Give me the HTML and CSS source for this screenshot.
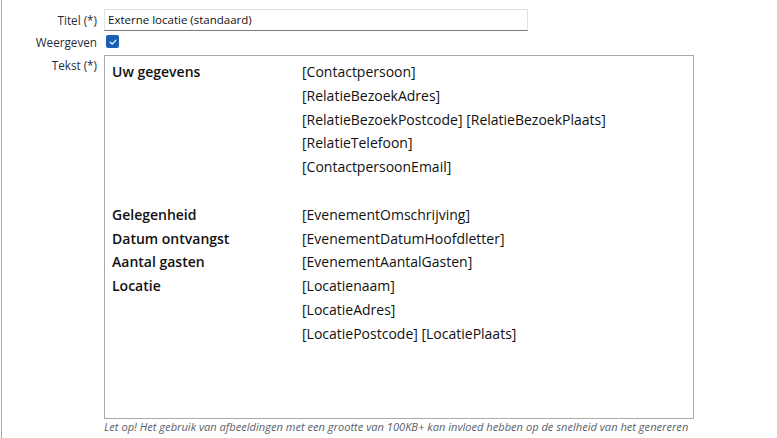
FILE: index.html
```html
<!DOCTYPE html>
<html lang="nl">
<head>
<meta charset="utf-8">
<title>Externe locatie</title>
<link rel="stylesheet" href="styles.css">
</head>
<body>
<div class="page">
  <div class="form">
    <div class="row row-title">
      <label class="label">Titel (*)</label>
      <div class="field"><div class="input">Externe locatie (standaard)</div></div>
    </div>
    <div class="row row-check">
      <label class="label">Weergeven</label>
      <div class="field field-check">
        <span class="checkbox"><svg viewBox="0 0 12 12" width="12" height="12"><path d="M3.2 6.2 L5.2 8.1 L8.9 4.2" fill="none" stroke="#fff" stroke-width="1.2" stroke-linecap="round" stroke-linejoin="round"/></svg></span>
      </div>
    </div>
    <div class="row row-text">
      <label class="label">Tekst (*)</label>
      <div class="field">
        <div class="editor">
          <table class="data">
            <tr><th>Uw gegevens</th><td>[Contactpersoon]</td></tr>
            <tr><th></th><td>[RelatieBezoekAdres]</td></tr>
            <tr><th></th><td>[RelatieBezoekPostcode] [RelatieBezoekPlaats]</td></tr>
            <tr><th></th><td>[RelatieTelefoon]</td></tr>
            <tr><th></th><td>[ContactpersoonEmail]</td></tr>
            <tr><th></th><td>&nbsp;</td></tr>
            <tr><th>Gelegenheid</th><td>[EvenementOmschrijving]</td></tr>
            <tr><th>Datum ontvangst</th><td>[EvenementDatumHoofdletter]</td></tr>
            <tr><th>Aantal gasten</th><td>[EvenementAantalGasten]</td></tr>
            <tr><th>Locatie</th><td>[Locatienaam]</td></tr>
            <tr><th></th><td>[LocatieAdres]</td></tr>
            <tr><th></th><td>[LocatiePostcode] [LocatiePlaats]</td></tr>
          </table>
        </div>
        <p class="hint">Let op! Het gebruik van afbeeldingen met een grootte van 100KB+ kan invloed hebben op de snelheid van het genereren</p>
      </div>
    </div>
  </div>
</div>
</body>
</html>
```
FILE: styles.css
```css
html, body {
  margin: 0;
  padding: 0;
  background: #fff;
  height: 100%;
}
body {
  font-family: "Open Sans", "Noto Sans", sans-serif;
  color: #1e2a3a;
}
.page {
  margin-left: 1px;
  border-left: 1px solid #a8a8a8;
  min-height: 438px;
  box-sizing: border-box;
  padding-top: 9px;
}
.form {
  display: flex;
  flex-direction: column;
}
.row {
  display: grid;
  grid-template-columns: 95px 1fr;
  column-gap: 7px;
  align-items: start;
}
.label {
  text-align: right;
  font-size: 11.7px;
  line-height: 16px;
  color: #1f2b3c;
}
.row-title .label { padding-top: 3px; }
.input {
  width: 424px;
  height: 22px;
  box-sizing: border-box;
  border: 1px solid #e2e2e2;
  border-bottom: 1px solid #7a7a7a;
  font-size: 11.5px;
  line-height: 20px;
  padding-left: 3px;
  color: #111;
}
.row-check {
  margin-top: 4px;
  height: 14px;
}
.row-check .label { margin-top: -1px; }
.field-check {
  display: flex;
  height: 14px;
  align-items: flex-start;
}
.checkbox {
  display: flex;
  margin-left: 2px;
  width: 13px;
  height: 13px;
  border-radius: 2px;
  background: #1a5fb4;
  align-items: center;
  justify-content: center;
}
.row-text { margin-top: 6px; }
.row-text .label { padding-top: 2px; }
.editor {
  width: 590px;
  height: 364px;
  box-sizing: border-box;
  border: 1px solid #a9a9a9;
  padding: 4px 7px;
}
.data {
  border-collapse: collapse;
  font-size: 14px;
  color: #111;
}
.data th, .data td {
  padding: 0;
  height: 23.8px;
  line-height: 23.8px;
  vertical-align: middle;
  text-align: left;
  white-space: nowrap;
}
.data th {
  width: 190px;
  font-weight: 600;
  color: #111;
}
.hint {
  margin: 1px 0 0 0;
  font-size: 11.1px;
  font-style: italic;
  color: #5a5f6a;
  line-height: 14px;
  white-space: nowrap;
}
```
